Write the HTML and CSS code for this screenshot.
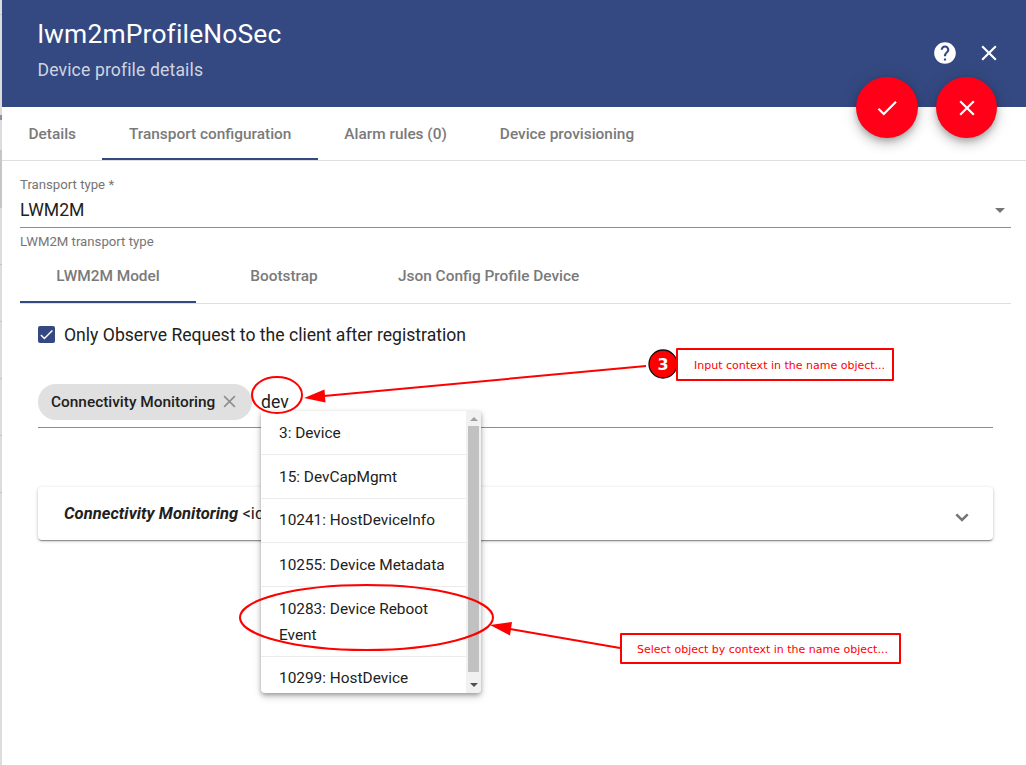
FILE: index.html
```html
<!DOCTYPE html>
<html lang="en">
<head>
<meta charset="utf-8">
<title>Device profile details</title>
<link rel="stylesheet" href="styles.css">
</head>
<body>
<div class="app">
  <aside class="backdrop"><i class="band top"></i><i class="band upper"></i><i class="band mid"></i><i class="band selected"></i><i class="band rest"></i></aside>
  <main class="drawer">
    <header class="header">
      <div class="titles">
        <h1 class="title">lwm2mProfileNoSec</h1>
        <p class="subtitle">Device profile details</p>
      </div>
      <div class="header-actions">
        <svg class="icon help" viewBox="0 0 24 24"><path fill="#fff" d="M12 2C6.48 2 2 6.48 2 12s4.480 10 10 10 10-4.480 10-10S17.520 2 12 2zm1 17h-2v-2h2v2zm2.070-7.750l-.9.920C13.450 12.900 13 13.500 13 15h-2v-.5c0-1.100.450-2.100 1.170-2.830l1.240-1.260c.370-.360.590-.860.590-1.410 0-1.100-.9-2-2-2s-2 .9-2 2H8c0-2.210 1.790-4 4-4s4 1.790 4 4c0 .880-.360 1.680-.930 2.250z"/></svg>
        <svg class="icon close" viewBox="0 0 24 24"><path fill="#fff" d="M19 6.410L17.590 5 12 10.590 6.410 5 5 6.410 10.590 12 5 17.590 6.410 19 12 13.410 17.590 19 19 17.590 13.410 12z"/></svg>
      </div>
      <div class="fabs">
        <button class="fab"><svg class="icon" viewBox="0 0 24 24"><path fill="#fff" d="M9 16.170L4.830 12l-1.420 1.410L9 19 21 7l-1.410-1.410z"/></svg></button>
        <button class="fab"><svg class="icon" viewBox="0 0 24 24"><path fill="#fff" d="M19 6.410L17.590 5 12 10.590 6.410 5 5 6.410 10.590 12 5 17.590 6.410 19 12 13.410 17.590 19 19 17.590 13.410 12z"/></svg></button>
      </div>
    </header>
    <nav class="tabs main-tabs">
      <a class="tab">Details</a>
      <a class="tab active">Transport configuration</a>
      <a class="tab">Alarm rules (0)</a>
      <a class="tab">Device provisioning</a>
    </nav>
    <section class="content">
      <div class="label">Transport type *</div>
      <div class="select"><span>LWM2M</span><i class="caret"></i></div>
      <div class="hint">LWM2M transport type</div>
      <nav class="tabs sub-tabs">
        <a class="tab active">LWM2M Model</a>
        <a class="tab">Bootstrap</a>
        <a class="tab json">Json Config Profile Device</a>
      </nav>
      <div class="model">
        <label class="check"><span class="box"><svg viewBox="0 0 24 24"><path d="M4.100 12.700 9 17.600 20.300 6.300" fill="none" stroke="#fff" stroke-width="2.130"/></svg></span><span class="check-text">Only Observe Request to the client after registration</span></label>
        <div class="chips">
          <span class="chip"><span class="chip-text">Connectivity Monitoring</span><svg viewBox="0 0 14 14"><path d="M1.200 1.200 12.800 12.800M12.800 1.200 1.200 12.800" stroke="#8e8e8e" stroke-width="1.700"/></svg></span>
          <span class="query">dev</span>
          <div class="menu">
            <div class="options">
              <div class="option">3: Device</div>
              <div class="option">15: DevCapMgmt</div>
              <div class="option raised">10241: HostDeviceInfo</div>
              <div class="option">10255: Device Metadata</div>
              <div class="option">10283: Device Reboot Event</div>
              <div class="option raised">10299: HostDevice</div>
            </div>
            <div class="scrollbar"><i class="up"></i><i class="thumb"></i><i class="down"></i></div>
          </div>
        </div>
        <div class="panel"><span class="panel-title"><b>Connectivity Monitoring</b> &lt;id</span><svg class="chevron" viewBox="0 0 14 9"><path d="M1.300 1.300 7 7 12.700 1.300" fill="none" stroke="#757575" stroke-width="2.500"/></svg></div>
      </div>
    </section>
  </main>
  <div class="notes">
    <svg class="marks" viewBox="0 0 1026 765">
      <g fill="none" stroke="#f00" stroke-width="2">
        <ellipse cx="277" cy="395" rx="25" ry="18"/>
        <ellipse cx="366.500" cy="617.500" rx="126.500" ry="32.500"/>
        <path d="M646 366 324 396M620 648 510 629"/>
      </g>
      <path fill="#f00" d="M304 398 324.500 389.500 325.500 402.500ZM490 625 512 622 510 635.500Z"/>
      <circle cx="663" cy="364" r="14" fill="#f00" stroke="#111" stroke-width="1.300"/>
    </svg>
    <span class="number">3</span>
    <div class="note first">Input context in the name object...</div>
    <div class="note second">Select object by context in the name object...</div>
  </div>
</div>
</body>
</html>
```
FILE: styles.css
```css
* { box-sizing: border-box; }
body { margin: 0; background: #fff; font-family: Roboto, sans-serif; color: #212121; }
.app { position: relative; display: flex; width: 1026px; height: 765px; overflow: hidden; }
.backdrop { width: 2px; display: flex; flex-direction: column; background: #dcdcdc; }
.band { display: block; border-bottom: 1px solid #c4c4c4; }
.top { height: 15px; }
.upper { height: 100px; border: 0; }
.mid { height: 36px; border-top: 5px solid #8b8fa5; }
.selected { height: 57px; background: #c6c6c6; }
.rest { height: 285px; border: 0; background: repeating-linear-gradient(#dcdcdc 0 56px, #c4c4c4 56px 57px); }
.drawer { flex: 1; min-width: 0; background: #fff; }

.header { position: relative; height: 107px; background: #344981; color: #fff; display: flex; justify-content: space-between; padding: 18px 24.500px 0 35.500px; }
.title { margin: 0; font-size: 26.400px; line-height: 32px; font-weight: 400; letter-spacing: .17px; }
.subtitle { margin: 9px 0 0; font-size: 17.600px; line-height: 22px; letter-spacing: .13px; color: #ced4e1; }
.header-actions { display: flex; gap: 18px; padding-top: 22px; height: 48px; }
.icon { display: block; width: 26px; height: 26px; }
.fabs { position: absolute; right: 29px; top: 77px; display: flex; gap: 18px; z-index: 2; }
.fab { width: 62px; height: 61px; padding: 0; border: 0; border-radius: 50%; background: #ff0018; display: flex; align-items: center; justify-content: center; box-shadow: 0 3px 6px -1px rgba(0,0,0,.25), 0 7px 11px rgba(0,0,0,.14), 0 1px 19px rgba(0,0,0,.1); }
.fab + .fab { width: 61px; }
.fab .icon { width: 26px; height: 26px; }

.tabs { display: flex; height: 54px; border-bottom: 1px solid #dfdfdf; }
.tab { height: 53px; line-height: 53px; padding: 0 26.500px; font-size: 15.400px; font-weight: 500; color: #7a7a7a; white-space: nowrap; }
.main-tabs .tab { line-height: 55px; }
.tab.active { border-bottom: 2px solid #344981; }
.content { padding: 16px 15px 0 18px; }
.label, .hint { font-size: 13.200px; line-height: 17px; color: #757575; }
.label { margin-top: -1px; }
.select { display: flex; justify-content: space-between; align-items: center; height: 35px; padding: 0 6px 0 0; border-bottom: 1px solid #8e8e8e; font-size: 17.600px; }
.caret { border: 5.500px solid transparent; border-top-color: #757575; border-bottom: 0; }
.hint { margin-top: 5px; }
.sub-tabs .tab { min-width: 176px; padding: 0 26px; text-align: center; }
.model { padding: 0 18px; }
.check { display: flex; align-items: center; height: 22px; margin-top: 20px; gap: 9px; font-size: 17.600px; }
.box { width: 17px; height: 17px; margin-bottom: 1px; border-radius: 2px; background: #344981; display: flex; }
.box svg { width: 17px; height: 17px; }
.chips { position: relative; display: flex; align-items: center; gap: 9px; height: 44px; margin-top: 38px; padding-bottom: 7px; border-bottom: 1px solid #8e8e8e; }
.chip { height: 36px; width: 214px; padding: 0 16px 0 13px; border-radius: 18px; background: #e0e0e0; display: flex; align-items: center; justify-content: space-between; font-size: 15.400px; font-weight: 500; }
.chip svg { width: 13px; height: 13px; margin-bottom: 1px; }
.query { font-size: 17.600px; }
.menu { position: absolute; left: 223px; top: 27px; width: 220px; height: 282px; z-index: 3; display: flex; overflow: hidden; background: #fff; border-radius: 0 0 4px 4px; box-shadow: 0 2px 4px rgba(0,0,0,.3), 0 4px 8px rgba(0,0,0,.15); }
.options { flex: 1; overflow: hidden; }
.option { min-height: 44px; padding: 9px 18px 8px; border-bottom: 1px solid #ebebeb; font-size: 15.400px; line-height: 26px; }
.option.raised { padding-top: 8px; }
.scrollbar { width: 15px; display: flex; flex-direction: column; align-items: center; background: #f1f1f1; }
.up { margin-top: 6px; border: 4px solid transparent; border-bottom-color: #a0a0a0; border-top: 0; }
.thumb { width: 11px; height: 246px; margin-top: 5px; background: #c1c1c1; }
.down { margin-top: 11px; border: 4px solid transparent; border-top-color: #505050; border-bottom: 0; }
.panel { display: flex; justify-content: space-between; align-items: center; height: 53px; margin-top: 59px; padding: 0 24px 0 26px; border-radius: 4px; box-shadow: 0 2px 1px -1px rgba(0,0,0,.3), 0 1px 2px rgba(0,0,0,.2), 0 1px 4px rgba(0,0,0,.14); font-size: 16.500px; }
.panel-title { letter-spacing: .07px; }
.panel-title b { font-style: italic; font-weight: 700; }
.chevron { width: 14px; height: 9px; margin-top: 7px; }

.notes { position: absolute; inset: 0; z-index: 5; color: #f00; font-family: "DejaVu Sans", sans-serif; }
.marks { position: absolute; inset: 0; width: 1026px; height: 765px; }
.number { position: absolute; left: 649px; top: 355px; width: 28px; text-align: center; color: #fff; font-size: 16px; line-height: 20px; font-weight: 700; }
.note { position: absolute; border: 2px solid #f00; background: #fff; border-radius: 1px; font-size: 11px; white-space: nowrap; }
.first { left: 676px; top: 348px; width: 218px; height: 33px; line-height: 31px; padding-left: 16px; }
.second { left: 620px; top: 633px; width: 281px; height: 31px; line-height: 29px; padding-left: 15px; }
```
